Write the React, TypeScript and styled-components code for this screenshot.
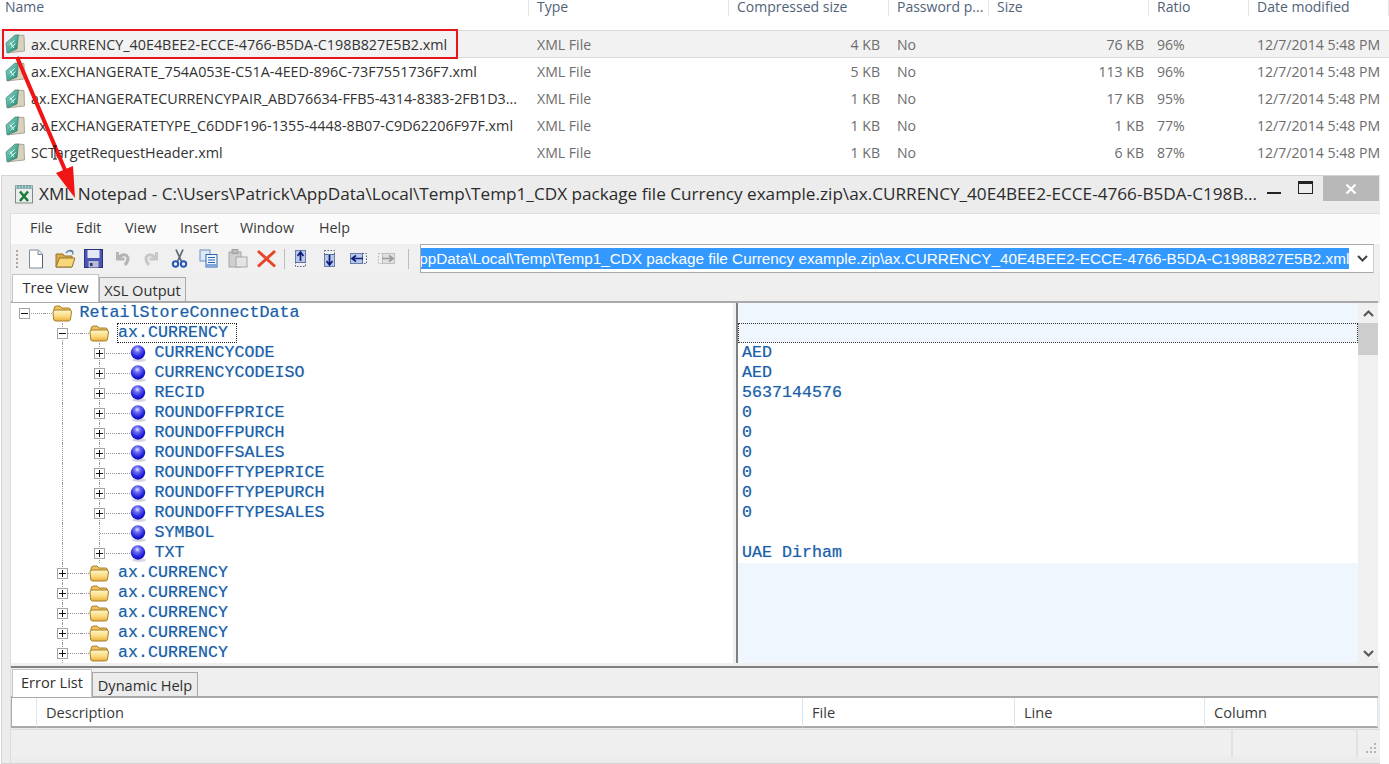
import React from "react";
import styled, { createGlobalStyle } from "styled-components";

const GlobalStyle = createGlobalStyle`
  html, body {
    margin: 0;
    padding: 0;
    background: #fff;
    overflow: hidden;
  }
  body {
    font-family: "Open Sans", "Noto Sans", sans-serif;
  }
`;

const Page = styled.div`
  position: relative;
  width: 1389px;
  height: 764px;
  overflow: hidden;
  background: #fff;
`;

/* ---------- explorer listing ---------- */

const columns = "529px 200px 160px 100px 160px 100px 140px";

const Explorer = styled.div`
  height: 175px;
  box-sizing: border-box;
`;

const HeaderRow = styled.div`
  display: grid;
  grid-template-columns: ${columns};
  height: 30px;
  font-size: 14px;
  color: #4f6278;
`;

const HeaderCell = styled.div<{ $first?: boolean }>`
  height: 16px;
  line-height: 14px;
  padding-left: ${(p) => (p.$first ? "5px" : "8px")};
  border-right: 1px solid #e5e5e5;
  white-space: nowrap;
`;

const FileRow = styled.div<{ $selected?: boolean }>`
  display: grid;
  grid-template-columns: ${columns};
  height: ${(p) => (p.$selected ? 28 : 27)}px;
  box-sizing: border-box;
  align-items: center;
  font-size: 14.1px;
  color: #6d6d6d;
  background: ${(p) => (p.$selected ? "#f2f2f2" : "#fff")};
  border-top: 1px solid ${(p) => (p.$selected ? "#d9d9d9" : "transparent")};
  border-bottom: 1px solid ${(p) => (p.$selected ? "#d9d9d9" : "transparent")};
`;

const NameCell = styled.div`
  display: flex;
  align-items: center;
  gap: 6px;
  padding-left: 5px;
  font-size: 14.35px;
  color: #333;
  white-space: nowrap;
`;

const Cell = styled.div<{ $right?: boolean; $pad?: number }>`
  text-align: ${(p) => (p.$right ? "right" : "left")};
  padding-left: ${(p) => (p.$right ? 0 : 8)}px;
  padding-right: ${(p) => p.$pad ?? 0}px;
  white-space: nowrap;
`;

/* ---------- XML Notepad window ---------- */

const Window = styled.div`
  margin-left: 1px;
  width: 1379px;
  height: 589px;
  box-sizing: border-box;
  background: #ececec;
  border: 1px solid #d4d4d4;
  border-right: none;
  display: flex;
  flex-direction: column;
`;

const TitleBar = styled.div`
  height: 37px;
  display: flex;
  align-items: flex-start;
  flex: none;
`;

const TitleIcon = styled.div`
  margin: 8px 0 0 12px;
  width: 20px;
  height: 20px;
  flex: none;
`;

const TitleText = styled.div`
  margin-left: 5px;
  margin-top: 6px;
  width: 1222px;
  font-size: 17.17px;
  line-height: 24px;
  color: #2b2b2b;
  white-space: nowrap;
  overflow: hidden;
`;

const WindowButtons = styled.div`
  display: flex;
  align-items: flex-start;
  flex: none;
`;

const Minimize = styled.div`
  width: 14px;
  height: 2px;
  margin: 16px 17px 0 6px;
  background: #222;
`;

const Maximize = styled.div`
  width: 13px;
  height: 9px;
  margin: 5px 10px 0 0;
  border: 1px solid #222;
  border-top-width: 3px;
  box-sizing: content-box;
`;

const Close = styled.div`
  width: 56px;
  height: 25px;
  background: #b8b8b8;
  color: #fff;
  display: flex;
  align-items: center;
  justify-content: center;
`;

const Client = styled.div`
  margin-left: 8px;
  flex: 1;
  display: flex;
  flex-direction: column;
  min-height: 0;
  border-left: 1px solid #dcdcdc;
`;

const MenuBar = styled.div`
  height: 31px;
  flex: none;
  background: #fbfbfb;
  border-top: 1px solid #dedede;
  box-sizing: border-box;
  display: flex;
  align-items: center;
  font-size: 14.3px;
  color: #3a3a3a;
  padding: 0 0 4px 19px;
`;

const MenuItem = styled.span<{ $width: number }>`
  width: ${(p) => p.$width}px;
`;

const ToolBar = styled.div`
  height: 29px;
  flex: none;
  background: #f0f0f0;
  display: flex;
  align-items: center;
`;

const Grip = styled.div`
  width: 2px;
  height: 18px;
  margin-left: 5px;
  background: repeating-linear-gradient(to bottom, #a8a8a8 0 2px, transparent 2px 4px);
`;

const ToolGroup = styled.div<{ $left: number }>`
  display: flex;
  margin-left: ${(p) => p.$left}px;
`;

const ToolSlot = styled.div`
  width: 28.8px;
  height: 22px;
  display: flex;
  align-items: center;
  justify-content: center;
`;

const ToolSep = styled.div<{ $left: number }>`
  width: 1px;
  height: 20px;
  background: #bdbdbd;
  margin-left: ${(p) => p.$left}px;
`;

const Combo = styled.div`
  margin-left: 11px;
  width: 954px;
  height: 29px;
  box-sizing: border-box;
  background: #fff;
  border: 1px solid #aaa;
  border-right-color: #ccc;
  display: flex;
  align-items: center;
`;

const ComboValue = styled.div`
  width: 928px;
  height: 21px;
  overflow: hidden;
  display: flex;
  justify-content: flex-end;
  flex: none;
`;

const ComboSelection = styled.span`
  background: #3399ff;
  color: #fff;
  font-family: "Liberation Sans", Arial, sans-serif;
  font-size: 15.3px;
  line-height: 21px;
  white-space: nowrap;
  flex: none;
`;

const ComboArrow = styled.div`
  margin-left: 8px;
  display: flex;
  color: #444;
`;

const TabStrip = styled.div<{ $height: number }>`
  height: ${(p) => p.$height}px;
  flex: none;
  display: flex;
  align-items: flex-end;
  background: #efefef;
  padding-left: 1px;
  box-sizing: border-box;
  border-bottom: 2px solid #a9a9a9;
  margin-right: 2px;
`;

const Tab = styled.div<{ $active?: boolean; $width: number }>`
  width: ${(p) => p.$width}px;
  height: ${(p) => (p.$active ? 28 : 24)}px;
  margin-bottom: ${(p) => (p.$active ? -1 : 0)}px;
  box-sizing: border-box;
  background: ${(p) => (p.$active ? "#fff" : "#ececec")};
  border: 1px solid ${(p) => (p.$active ? "#c4c4c4" : "#a9a9a9")};
  border-bottom: none;
  font-size: 14.6px;
  line-height: ${(p) => (p.$active ? 25 : 24)}px;
  color: #2f2f2f;
  text-align: center;
  white-space: nowrap;
`;

const Panes = styled.div`
  height: 360px;
  flex: none;
  display: flex;
  background: #fff;
  overflow: hidden;
`;

const TreePane = styled.div`
  width: 722px;
  flex: none;
  overflow: hidden;
`;

const TreeRow = styled.div`
  height: 20px;
  display: flex;
  align-items: center;
  margin-left: -5px;
`;

const Indent = styled.div<{ $line?: boolean; $hook?: boolean }>`
  position: relative;
  width: 37.5px;
  height: 20px;
  flex: none;
  display: flex;
  align-items: center;
  justify-content: center;
  &::before {
    content: "";
    display: ${(p) => (p.$line ? "block" : "none")};
    position: absolute;
    left: 18px;
    top: 0;
    bottom: 0;
    border-left: 1px dotted #9a9a9a;
  }
  &::after {
    content: "";
    display: ${(p) => (p.$hook ? "block" : "none")};
    position: absolute;
    left: 19px;
    right: 0;
    top: 10px;
    border-top: 1px dotted #9a9a9a;
  }
`;

const Expander = styled.div`
  position: relative;
  z-index: 1;
  width: 9px;
  height: 9px;
  border: 1px solid #a4a4a4;
  background: #fff;
  display: flex;
  align-items: center;
  justify-content: center;
`;

const Glyph = styled.svg`
  display: block;
`;

const Connector = styled.div<{ $width: number }>`
  width: ${(p) => p.$width}px;
  height: 0;
  border-top: 1px dotted #9a9a9a;
  flex: none;
`;

const TreeLabel = styled.span<{ $focus?: boolean; $gap: number }>`
  font-family: "Liberation Mono", "Courier New", monospace;
  font-size: 16.67px;
  line-height: 18px;
  color: #1c5fa8;
  text-shadow: 0 0 1px rgba(28, 95, 168, 0.45);
  margin-left: ${(p) => p.$gap}px;
  white-space: nowrap;
  ${(p) => (p.$focus ? "outline: 1px dotted #222; padding: 0 8px 0 0;" : "")}
`;

const Splitter = styled.div`
  width: 5px;
  flex: none;
  background: #f0f0f0;
  border-right: 2px solid #7f7f7f;
  box-sizing: border-box;
`;

const ValuePane = styled.div`
  width: 620px;
  flex: none;
  overflow: hidden;
`;

const ValueRow = styled.div<{ $tint?: boolean; $focus?: boolean }>`
  height: 20px;
  box-sizing: border-box;
  background: ${(p) => (p.$tint ? "#eff6fe" : "#fff")};
  font-family: "Liberation Mono", "Courier New", monospace;
  font-size: 16.67px;
  line-height: 20px;
  color: #1c5fa8;
  text-shadow: 0 0 1px rgba(28, 95, 168, 0.45);
  padding-left: 4px;
  ${(p) => (p.$focus ? "border: 1px dotted #333;" : "")}
`;

const ScrollBar = styled.div`
  width: 20px;
  flex: none;
  background: #f0f0f0;
  display: flex;
  flex-direction: column;
  align-items: center;
`;

const ScrollArrow = styled.div`
  height: 20px;
  flex: none;
  display: flex;
  align-items: center;
  color: #555;
`;

const ScrollThumb = styled.div`
  width: 100%;
  height: 32px;
  background: #cdcdcd;
  flex: none;
`;

const ScrollTrack = styled.div`
  flex: 1;
`;

const BottomSplit = styled.div`
  height: 5px;
  flex: none;
  background: #f0f0f0;
  border-bottom: 2px solid #7f7f7f;
  box-sizing: border-box;
  margin-right: 2px;
`;

const ListHeader = styled.div`
  height: 30px;
  flex: none;
  box-sizing: border-box;
  display: grid;
  grid-template-columns: 25px 766px 212px 190px 1fr;
  background: #fff;
  border-bottom: 2px solid #a9a9a9;
  border-left: 1px solid #a9a9a9;
  margin-right: 2px;
  font-size: 14.6px;
  color: #3a3a3a;
`;

const ListColumn = styled.div`
  line-height: 29px;
  padding-left: 9px;
  border-right: 1px solid #dbe6f5;
`;

const StatusBar = styled.div`
  flex: 1;
  display: flex;
  background: #efefef;
  border-top: 1px solid #dcdcdc;
  margin-top: 1px;
`;

const StatusCell = styled.div<{ $width: number }>`
  width: ${(p) => p.$width}px;
  height: 27px;
  flex: none;
  border-right: 2px solid #e2e2e2;
  box-sizing: border-box;
`;

const Resize = styled.div`
  flex: 1;
  display: flex;
  align-items: flex-end;
  justify-content: flex-end;
  padding: 0 3px 3px 0;
  height: 27px;
  box-sizing: border-box;
`;

const WindowFoot = styled.div`
  height: 8px;
  flex: none;
`;

/* ---------- annotation laid over the screenshot ---------- */

const HighlightBox = styled.div`
  position: absolute;
  left: 2px;
  top: 29px;
  width: 456px;
  height: 30px;
  box-sizing: border-box;
  border: 2px solid #e8161c;
`;

const ArrowLayer = styled.svg`
  position: absolute;
  left: 0;
  top: 0;
  pointer-events: none;
`;

/* ---------- icons ---------- */

const XmlFileIcon = () => (
  <svg width="20" height="20" viewBox="0 0 20 20" style={{ flex: "none" }}>
    <defs>
      <linearGradient id="xf" x1="0" y1="0" x2="1" y2="1">
        <stop offset="0" stopColor="#8fdcca" />
        <stop offset="1" stopColor="#16826e" />
      </linearGradient>
    </defs>
    <path d="M12 1 L19 1.5 L19.5 17 L6 18.5 L3 19 Z" fill="#d8d2bd" stroke="#8f8a78" strokeWidth="0.7" />
    <path d="M1 9 L10 1 L13.5 1 L12 15 L2 19 Z" fill="url(#xf)" stroke="#3a6e66" strokeWidth="0.6" />
    <path d="M4.5 11 L9.5 6.5 M5.5 14 L10.5 9.5 M5 8.5 L9 14" stroke="#e6fff8" strokeWidth="1" fill="none" />
  </svg>
);

const NotepadIcon = () => (
  <svg width="20" height="20" viewBox="0 0 20 20">
    <rect x="1.5" y="3" width="17" height="16" fill="#e8ecea" stroke="#7d8a86" />
    <rect x="1.5" y="1.5" width="17" height="3" fill="#9fd6d8" stroke="#7d9a9c" strokeWidth="0.6" />
    <path d="M4 1v3M7 1v3M10 1v3M13 1v3M16 1v3" stroke="#56686a" strokeWidth="0.8" />
    <path d="M6 7.5 L14 17 M14 7.5 L6 17" stroke="#1e7a3d" strokeWidth="2.6" />
  </svg>
);

const FolderIcon = () => (
  <svg width="20" height="17" viewBox="0 0 20 17" style={{ flex: "none" }}>
    <defs>
      <linearGradient id="fo" x1="0" y1="0" x2="0" y2="1">
        <stop offset="0" stopColor="#fff6c8" />
        <stop offset="0.55" stopColor="#fbdc82" />
        <stop offset="1" stopColor="#e9ae3c" />
      </linearGradient>
    </defs>
    <path d="M2 4 Q2 1 4.5 1 L8 1 L10 3 L16.5 3 Q18.5 3 18.5 5 L18.5 7 L2 7 Z" fill="#efc25a" stroke="#a67c2e" strokeWidth="1" />
    <path d="M1 7 Q1 5 3 5 L17.5 5 Q19.5 5 19.5 7 L18.5 14 Q18.3 16 16.5 16 L3.5 16 Q1.8 16 1.6 14 Z" fill="url(#fo)" stroke="#a67c2e" strokeWidth="1" />
  </svg>
);

const SphereIcon = () => (
  <svg width="17" height="17" viewBox="0 0 17 17" style={{ flex: "none" }}>
    <defs>
      <radialGradient id="sph" cx="0.45" cy="0.3" r="0.72">
        <stop offset="0" stopColor="#e4e4ff" />
        <stop offset="0.28" stopColor="#6c6cf4" />
        <stop offset="0.75" stopColor="#1a1ad8" />
        <stop offset="1" stopColor="#12129a" />
      </radialGradient>
    </defs>
    <ellipse cx="9" cy="15" rx="7" ry="1.8" fill="#d4d4e4" />
    <circle cx="8" cy="7.5" r="7.2" fill="url(#sph)" />
  </svg>
);

const Plus = () => (
  <Glyph width="7" height="7" viewBox="0 0 7 7">
    <path d="M0 3.5h7M3.5 0v7" stroke="#111" strokeWidth="1" />
  </Glyph>
);

const Minus = () => (
  <Glyph width="7" height="7" viewBox="0 0 7 7">
    <path d="M0 3.5h7" stroke="#111" strokeWidth="1" />
  </Glyph>
);

const Chevron = ({ up }: { up?: boolean }) => (
  <Glyph width="11" height="7" viewBox="0 0 11 7">
    <path d={up ? "M1 6 L5.5 1.5 L10 6" : "M1 1 L5.5 5.5 L10 1"} stroke="currentColor" strokeWidth="2" fill="none" />
  </Glyph>
);

const toolIcons: React.ReactNode[] = [
  // new
  <g key="n">
    <path d="M3.5 1h9l4 4v14h-13z" fill="#fff" stroke="#7a8c9c" />
    <path d="M12 1.5v4h4" fill="#dfe8f0" stroke="#7a8c9c" />
    <path d="M16.5 6v13" stroke="#4e6172" />
  </g>,
  // open
  <g key="o">
    <path d="M1 5h7l1.5 2H17v11H1z" fill="#d7ab4a" stroke="#94742e" />
    <path d="M1 18l3.5-9H20l-3 9z" fill="#f8d77a" stroke="#94742e" />
    <path d="M11 4 Q14 0 18 2.5 M18 2.5l-3-.5 M18 2.5l-.4 3" stroke="#5a80a8" fill="none" strokeWidth="1.3" />
  </g>,
  // save
  <g key="s">
    <rect x="0.5" y="0.5" width="18" height="18" fill="#4d55b4" stroke="#2c3080" />
    <rect x="3.5" y="1" width="12" height="8" fill="#e4e8f8" />
    <rect x="4.5" y="12" width="10" height="6.5" fill="#b8bcd0" />
    <rect x="6" y="14" width="2.5" height="3" fill="#2c3080" />
  </g>,
  // undo
  <path key="u" d="M4.5 3v7h7 M5 9.5 Q9 4 13.5 6.5 Q17 10 12 16" fill="none" stroke="#b4b4b4" strokeWidth="3" />,
  // redo
  <path key="r" d="M14.5 3v7h-7 M14 9.5 Q10 4 5.5 6.5 Q2 10 7 16" fill="none" stroke="#c8c8c8" strokeWidth="3" />,
  // cut
  <g key="c" fill="none">
    <path d="M6 0.5l5.500 12 M13 0.5L7.5 12.5" stroke="#5d6c7c" strokeWidth="1.8" />
    <circle cx="5.5" cy="15" r="2.7" stroke="#2a58b8" strokeWidth="2" />
    <circle cx="13.5" cy="15" r="2.7" stroke="#2a58b8" strokeWidth="2" />
  </g>,
  // copy
  <g key="cp">
    <rect x="1" y="1" width="10" height="11" fill="#dbe8f8" stroke="#6a90c0" />
    <rect x="7" y="5.5" width="11" height="12.5" fill="#eef5fd" stroke="#2f66b4" />
    <path d="M9 8.5h7M9 11h7M9 13.5h7" stroke="#2f66b4" />
    <rect x="7.5" y="15" width="10" height="2.5" fill="#7fa6dc" />
  </g>,
  // paste
  <g key="p">
    <rect x="1" y="3" width="12" height="15" fill="#cfcfcf" stroke="#a5a5a5" />
    <rect x="4" y="0.5" width="6" height="4" fill="#bbb" stroke="#a0a0a0" />
    <rect x="8" y="8" width="11" height="10" fill="#e4e4e4" stroke="#a5a5a5" />
  </g>,
  // delete
  <path key="d" d="M1 2l17 15.5M18 2L1 17.5" stroke="#e6452a" strokeWidth="3" />,
];

const Nudge = ({ dir, faded }: { dir: "up" | "down" | "left" | "right"; faded?: boolean }) => {
  const dark = faded ? "#9a9a9a" : "#10207a";
  const dots = faded ? "#b8b8b8" : "#4a5c88";
  const fill = faded ? "#e0e0e0" : "#b8c8ec";
  const edge = faded ? "#c0c0c0" : "#6a7fa8";
  const shapes = {
    up: { solid: [4.5, 1.5, 10, 12], dotted: [4.5, 13.5, 10, 4], arrow: "M9.5 12V3.5 M6.5 7l3-4 3 4" },
    down: { solid: [4.5, 5.5, 10, 12], dotted: [4.5, 1.5, 10, 4], arrow: "M9.5 6v9 M6.5 12l3 4 3-4" },
    left: { solid: [1.5, 4.5, 12, 10], dotted: [13.5, 4.5, 4, 10], arrow: "M14 9.5H3 M7 6.5l-4 3 4 3" },
    right: { solid: [5.5, 4.5, 12, 10], dotted: [1.5, 4.5, 4, 10], arrow: "M5 9.5h11 M12 6.5l4 3-4 3" },
  }[dir];
  const [sx, sy, sw, sh] = shapes.solid;
  const [dx, dy, dw, dh] = shapes.dotted;
  return (
    <svg width="19" height="19" viewBox="0 0 19 19">
      <rect x={sx} y={sy} width={sw} height={sh} fill={fill} stroke={edge} />
      <rect x={dx} y={dy} width={dw} height={dh} fill="none" stroke={dots} strokeDasharray="1.5 1.5" />
      <path d={shapes.arrow} stroke={dark} strokeWidth="1.7" fill="none" />
    </svg>
  );
};

/* ---------- data ---------- */

const files = [
  { name: "ax.CURRENCY_40E4BEE2-ECCE-4766-B5DA-C198B827E5B2.xml", comp: "4 KB", size: "76 KB", ratio: "96%" },
  { name: "ax.EXCHANGERATE_754A053E-C51A-4EED-896C-73F7551736F7.xml", comp: "5 KB", size: "113 KB", ratio: "96%" },
  { name: "ax.EXCHANGERATECURRENCYPAIR_ABD76634-FFB5-4314-8383-2FB1D3...", comp: "1 KB", size: "17 KB", ratio: "95%" },
  { name: "ax.EXCHANGERATETYPE_C6DDF196-1355-4448-8B07-C9D62206F97F.xml", comp: "1 KB", size: "1 KB", ratio: "77%" },
  { name: "SCTargetRequestHeader.xml", comp: "1 KB", size: "6 KB", ratio: "87%" },
];

const fields = [
  { name: "CURRENCYCODE", value: "AED" },
  { name: "CURRENCYCODEISO", value: "AED" },
  { name: "RECID", value: "5637144576" },
  { name: "ROUNDOFFPRICE", value: "0" },
  { name: "ROUNDOFFPURCH", value: "0" },
  { name: "ROUNDOFFSALES", value: "0" },
  { name: "ROUNDOFFTYPEPRICE", value: "0" },
  { name: "ROUNDOFFTYPEPURCH", value: "0" },
  { name: "ROUNDOFFTYPESALES", value: "0" },
  { name: "SYMBOL", value: "", leaf: true },
  { name: "TXT", value: "UAE Dirham" },
];

const menus: [string, number][] = [
  ["File", 46],
  ["Edit", 49],
  ["View", 55],
  ["Insert", 60],
  ["Window", 79],
  ["Help", 40],
];

const siblings = [0, 1, 2, 3, 4];

const App: React.FC = () => {
  return (
    <Page>
      <GlobalStyle />

      <Explorer>
        <HeaderRow>
          <HeaderCell $first>Name</HeaderCell>
          <HeaderCell>Type</HeaderCell>
          <HeaderCell>Compressed size</HeaderCell>
          <HeaderCell>Password p...</HeaderCell>
          <HeaderCell>Size</HeaderCell>
          <HeaderCell>Ratio</HeaderCell>
          <HeaderCell>Date modified</HeaderCell>
        </HeaderRow>
        {files.map((f, i) => (
          <FileRow key={f.name} $selected={i === 0}>
            <NameCell>
              <XmlFileIcon />
              {f.name}
            </NameCell>
            <Cell>XML File</Cell>
            <Cell $right $pad={9}>{f.comp}</Cell>
            <Cell>No</Cell>
            <Cell $right $pad={5}>{f.size}</Cell>
            <Cell>{f.ratio}</Cell>
            <Cell>12/7/2014 5:48 PM</Cell>
          </FileRow>
        ))}
      </Explorer>

      <Window>
        <TitleBar>
          <TitleIcon>
            <NotepadIcon />
          </TitleIcon>
          <TitleText>
            {"XML Notepad - C:\\Users\\Patrick\\AppData\\Local\\Temp\\Temp1_CDX package file Currency example.zip\\ax.CURRENCY_40E4BEE2-ECCE-4766-B5DA-C198B..."}
          </TitleText>
          <WindowButtons>
            <Minimize />
            <Maximize />
            <Close>
              <svg width="12" height="10" viewBox="0 0 12 10">
                <path d="M1.5 0.5l9 9M10.5 0.5l-9 9" stroke="#fff" strokeWidth="2.2" />
              </svg>
            </Close>
          </WindowButtons>
        </TitleBar>

        <Client>
          <MenuBar>
            {menus.map(([label, width]) => (
              <MenuItem key={label} $width={width}>{label}</MenuItem>
            ))}
          </MenuBar>

          <ToolBar>
            <Grip />
            <ToolGroup $left={4}>
              {toolIcons.map((icon, i) => (
                <ToolSlot key={i}>
                  <svg width="20" height="20" viewBox="0 0 20 20">{icon}</svg>
                </ToolSlot>
              ))}
            </ToolGroup>
            <ToolSep $left={3} />
            <ToolGroup $left={1}>
              <ToolSlot><Nudge dir="up" /></ToolSlot>
              <ToolSlot><Nudge dir="down" /></ToolSlot>
              <ToolSlot><Nudge dir="left" /></ToolSlot>
              <ToolSlot><Nudge dir="right" faded /></ToolSlot>
            </ToolGroup>
            <ToolSep $left={7} />
            <Combo>
              <ComboValue>
                <ComboSelection>
                  {"AppData\\Local\\Temp\\Temp1_CDX package file Currency example.zip\\ax.CURRENCY_40E4BEE2-ECCE-4766-B5DA-C198B827E5B2.xml"}
                </ComboSelection>
              </ComboValue>
              <ComboArrow><Chevron /></ComboArrow>
            </Combo>
          </ToolBar>

          <TabStrip $height={30}>
            <Tab $active $width={87}>Tree View</Tab>
            <Tab $width={87}>XSL Output</Tab>
          </TabStrip>

          <Panes>
            <TreePane>
              <TreeRow>
                <Indent $hook><Expander><Minus /></Expander></Indent>
                <Connector $width={8} />
                <FolderIcon />
                <TreeLabel $gap={8}>RetailStoreConnectData</TreeLabel>
              </TreeRow>
              <TreeRow>
                <Indent />
                <Indent $line $hook><Expander><Minus /></Expander></Indent>
                <Connector $width={8} />
                <FolderIcon />
                <TreeLabel $gap={9} $focus>ax.CURRENCY</TreeLabel>
              </TreeRow>
              {fields.map((f) => (
                <TreeRow key={f.name}>
                  <Indent />
                  <Indent $line />
                  <Indent $line $hook>
                    {!f.leaf && <Expander><Plus /></Expander>}
                  </Indent>
                  <Connector $width={11} />
                  <SphereIcon />
                  <TreeLabel $gap={8}>{f.name}</TreeLabel>
                </TreeRow>
              ))}
              {siblings.map((i) => (
                <TreeRow key={i}>
                  <Indent />
                  <Indent $line $hook><Expander><Plus /></Expander></Indent>
                  <Connector $width={8} />
                  <FolderIcon />
                  <TreeLabel $gap={9}>ax.CURRENCY</TreeLabel>
                </TreeRow>
              ))}
            </TreePane>

            <Splitter />

            <ValuePane>
              <ValueRow $tint />
              <ValueRow $tint $focus />
              {fields.map((f) => (
                <ValueRow key={f.name}>{f.value}</ValueRow>
              ))}
              {siblings.map((i) => (
                <ValueRow key={i} $tint />
              ))}
            </ValuePane>

            <ScrollBar>
              <ScrollArrow><Chevron up /></ScrollArrow>
              <ScrollThumb />
              <ScrollTrack />
              <ScrollArrow><Chevron /></ScrollArrow>
            </ScrollBar>
          </Panes>

          <BottomSplit />

          <TabStrip $height={30}>
            <Tab $active $width={80}>Error List</Tab>
            <Tab $width={106}>Dynamic Help</Tab>
          </TabStrip>

          <ListHeader>
            <ListColumn />
            <ListColumn>Description</ListColumn>
            <ListColumn>File</ListColumn>
            <ListColumn>Line</ListColumn>
            <ListColumn>Column</ListColumn>
          </ListHeader>

          <StatusBar>
            <StatusCell $width={1222} />
            <StatusCell $width={125} />
            <Resize>
              <svg width="12" height="12" viewBox="0 0 12 12">
                <path d="M9 1h2v2H9zM5 5h2v2H5zM9 5h2v2H9zM1 9h2v2H1zM5 9h2v2H5zM9 9h2v2H9z" fill="#b4b4b4" />
              </svg>
            </Resize>
          </StatusBar>
          <WindowFoot />
        </Client>
      </Window>

      <HighlightBox />
      <ArrowLayer width="1389" height="764" viewBox="0 0 1389 764">
        <path d="M17 57 L65 170" stroke="#f01414" strokeWidth="4" />
        <path d="M75 198 L56 173 L73 166 Z" fill="#f01414" />
        <path d="M53 146 h4 M55 146 v13 M53 159 h4" stroke="#111" strokeWidth="1" fill="none" />
      </ArrowLayer>
    </Page>
  );
};

export default App;
